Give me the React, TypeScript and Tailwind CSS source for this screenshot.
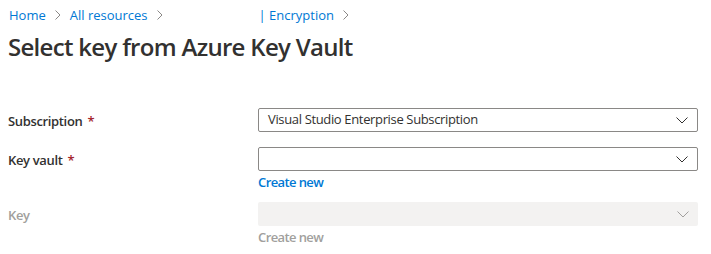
import React from 'react';

const font = { fontFamily: '"Open Sans", "Noto Sans", sans-serif' };

const Chevron: React.FC<{ disabled?: boolean }> = ({ disabled }) => (
  <svg width="12" height="7" viewBox="0 0 12 7" className="shrink-0">
    <polyline
      points="0.5,0.5 6,6 11.5,0.5"
      fill="none"
      stroke={disabled ? '#a19f9d' : '#323130'}
      strokeWidth="1"
    />
  </svg>
);

const Crumb: React.FC = () => (
  <svg width="6" height="10" viewBox="0 0 6 10" className="mx-[9px]">
    <polyline points="0.5,0.5 5,5 0.5,9.5" fill="none" stroke="#8a8886" strokeWidth="1" />
  </svg>
);

interface FieldProps {
  label: string;
  required?: boolean;
  disabled?: boolean;
  value?: string;
  link?: boolean;
}

const Field: React.FC<FieldProps> = ({ label, required, disabled, value, link }) => (
  <div className="flex">
    <div
      className={`w-[250px] h-[24px] pt-[3px] flex items-center text-[13px] font-semibold tracking-[-0.35px] ${disabled ? 'text-[#a19f9d]' : 'text-[#323130]'}`}
    >
      {label}
      {required && <span className="ml-[5px] text-[#a4262c]">*</span>}
    </div>
    <div className="w-[440px]">
      <div
        className={`h-[24px] rounded-[2px] flex items-center justify-between pl-[9px] pr-[9px] text-[13px] tracking-[-0.35px] ${disabled ? 'bg-[#f3f2f1]' : 'border border-[#8a8886] bg-white'}`}
      >
        <span className="text-[#323130]">{value}</span>
        <Chevron disabled={disabled} />
      </div>
      {link !== undefined && (
        <div className={`text-[13px] font-semibold tracking-[-0.6px] leading-[20px] mt-[1px] ${disabled ? 'text-[#a19f9d]' : 'text-[#0078d4]'}`}>
          Create new
        </div>
      )}
    </div>
  </div>
);

const App: React.FC = () => {
  return (
    <div className="w-[711px] h-[254px] bg-white pl-[8px]" style={font}>
      <div className="pt-[5px] h-[25px] flex items-center text-[13px] leading-[20px] text-[#0078d4]">
        <span className="ml-[1px]">Home</span>
        <Crumb />
        <span>All resources</span>
        <Crumb />
        <span className="ml-[87px]">| Encryption</span>
        <Crumb />
      </div>
      <h1 className="mt-[6px] text-[24px] leading-[32px] font-semibold tracking-[-0.7px] text-[#323130]">
        Select key from Azure Key Vault
      </h1>
      <div className="mt-[45px] flex flex-col">
        <Field label="Subscription" required value="Visual Studio Enterprise Subscription" />
        <div className="h-[15px]" />
        <Field label="Key vault" required link />
        <div className="h-[10px]" />
        <Field label="Key" disabled link />
      </div>
    </div>
  );
};

export default App;
